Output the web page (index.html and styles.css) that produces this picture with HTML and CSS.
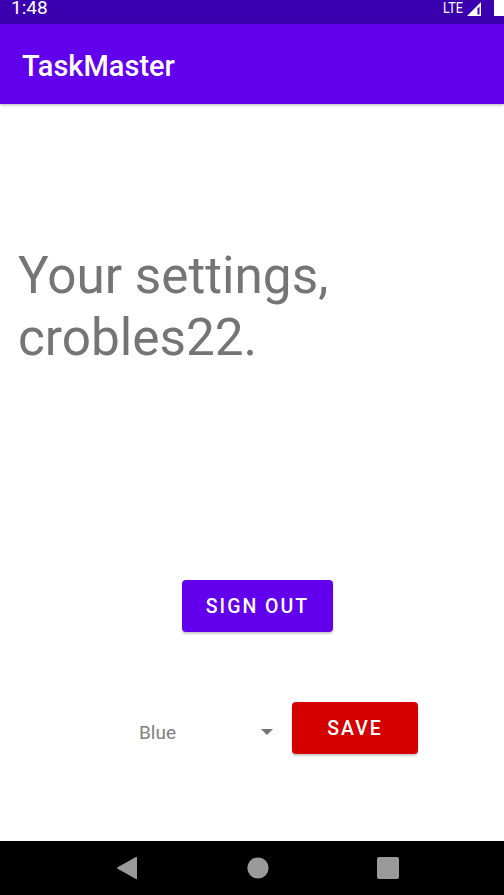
FILE: index.html
```html
<!DOCTYPE html>
<html>
<head>
<meta charset="utf-8">
<link rel="stylesheet" href="styles.css">
</head>
<body>
<div class="screen">
  <div class="status-bar">
    <span class="time">1:48</span>
    <div class="status-icons">
      <span class="lte">LTE</span>
      <svg class="signal" width="16" height="16" viewBox="0 0 16 16"><path d="M15 1 L15 15 L1 15 Z" fill="#fff"/><path d="M11.5 7.5 L11.5 13.5 L13.5 13.5 L13.5 5.5 Z" fill="#3a00b0"/></svg>
      <span class="battery"></span>
    </div>
  </div>
  <div class="app-bar"><span class="app-title">TaskMaster</span></div>
  <main class="content">
    <h1 class="greeting">Your settings,<br>crobles22.</h1>
    <div class="signout-row"><button class="btn btn-primary">SIGN OUT</button></div>
    <div class="theme-row">
      <div class="spinner">
        <span class="spinner-text">Blue</span>
        <svg class="spinner-arrow" width="12" height="6" viewBox="0 0 12 6"><path d="M0 0 L12 0 L6 6 Z" fill="#757575"/></svg>
      </div>
      <button class="btn btn-save">SAVE</button>
    </div>
  </main>
  <div class="nav-bar">
    <svg class="nav-back" width="22" height="24" viewBox="0 0 22 24"><path d="M21 1.5 L21 22.5 Q21 23.5 20 23 L1.5 12.8 Q0.5 12 1.5 11.2 L20 1 Q21 0.5 21 1.5 Z" fill="#9a9a9a"/></svg>
    <svg class="nav-home" width="22" height="22" viewBox="0 0 22 22"><circle cx="11" cy="11" r="10.6" fill="#9a9a9a"/></svg>
    <svg class="nav-recent" width="22" height="22" viewBox="0 0 22 22"><rect x="0" y="0" width="22" height="22" rx="2" fill="#9a9a9a"/></svg>
  </div>
</div>
</body>
</html>
```
FILE: styles.css
```css
html, body {
  margin: 0;
  padding: 0;
  background: #ffffff;
}
body {
  font-family: Roboto, "Noto Sans", sans-serif;
}
.screen {
  width: 504px;
  height: 895px;
  display: flex;
  flex-direction: column;
  overflow: hidden;
}
.status-bar {
  height: 24px;
  background: #3a00b0;
  color: #ffffff;
  display: flex;
  align-items: center;
  justify-content: space-between;
  padding-left: 11px;
  flex-shrink: 0;
}
.time {
  font-size: 19px;
  line-height: 24px;
  margin-top: -8px;
}
.status-icons {
  display: flex;
  align-items: center;
  height: 24px;
}
.lte {
  font-size: 14px;
  line-height: 14px;
  margin-right: 2px;
  margin-top: -8px;
  transform: scaleX(0.9);
}
.signal {
  margin-top: -7px;
  margin-right: 12px;
}
.battery {
  width: 10px;
  height: 16px;
  background: #ffffff;
  margin-top: -8px;
}
.app-bar {
  height: 80px;
  background: #6200ee;
  display: flex;
  align-items: center;
  padding-left: 22px;
  box-shadow: 0 1px 3px rgba(0,0,0,0.3);
  position: relative;
  z-index: 1;
  flex-shrink: 0;
}
.app-title {
  color: #ffffff;
  font-weight: 500;
  font-size: 29px;
  margin-top: 4px;
}
.content {
  flex: 1;
  display: flex;
  flex-direction: column;
}
.greeting {
  margin: 141px 0 0 18px;
  font-weight: 400;
  font-size: 51.3px;
  line-height: 62px;
  color: #757575;
}
.signout-row {
  display: flex;
  padding-left: 182px;
  margin-top: 211px;
}
.btn {
  border: none;
  border-radius: 4px;
  color: #ffffff;
  font-family: Roboto, "Noto Sans", sans-serif;
  font-weight: 500;
  font-size: 19.5px;
  letter-spacing: 2px;
  height: 52px;
  padding: 0;
  box-shadow: 0 2px 2px rgba(0,0,0,0.2);
}
.btn-primary {
  background: #6200ee;
  width: 151px;
}
.theme-row {
  display: flex;
  align-items: center;
  margin-top: 66px;
  padding-left: 130px;
}
.spinner {
  width: 162px;
  height: 52px;
  display: flex;
  align-items: center;
  justify-content: space-between;
  padding-left: 9px;
  padding-right: 19px;
  box-sizing: border-box;
  margin-top: 8px;
}
.spinner-text {
  font-size: 19px;
  color: #808080;
}
.btn-save {
  background: #d50000;
  width: 126px;
}
.nav-bar {
  height: 54px;
  background: #000000;
  display: flex;
  align-items: center;
  flex-shrink: 0;
  position: relative;
}
.nav-back {
  margin-left: 116px;
  margin-top: -1px;
}
.nav-home {
  margin-left: 109px;
}
.nav-recent {
  margin-left: 108px;
}
```
